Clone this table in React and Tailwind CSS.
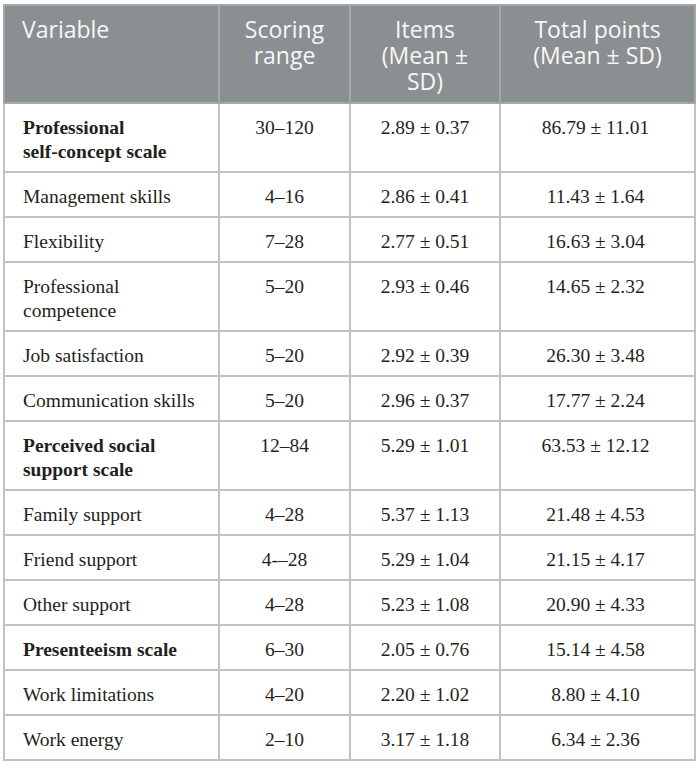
const ROWS = [
  { name: ['Professional', 'self-concept scale'], range: '30–120', items: '2.89 ± 0.37', total: '86.79 ± 11.01', bold: true },
  { name: ['Management skills'], range: '4–16', items: '2.86 ± 0.41', total: '11.43 ± 1.64' },
  { name: ['Flexibility'], range: '7–28', items: '2.77 ± 0.51', total: '16.63 ± 3.04' },
  { name: ['Professional', 'competence'], range: '5–20', items: '2.93 ± 0.46', total: '14.65 ± 2.32' },
  { name: ['Job satisfaction'], range: '5–20', items: '2.92 ± 0.39', total: '26.30 ± 3.48' },
  { name: ['Communication skills'], range: '5–20', items: '2.96 ± 0.37', total: '17.77 ± 2.24' },
  { name: ['Perceived social', 'support scale'], range: '12–84', items: '5.29 ± 1.01', total: '63.53 ± 12.12', bold: true },
  { name: ['Family support'], range: '4–28', items: '5.37 ± 1.13', total: '21.48 ± 4.53' },
  { name: ['Friend support'], range: '4-–28', items: '5.29 ± 1.04', total: '21.15 ± 4.17' },
  { name: ['Other support'], range: '4–28', items: '5.23 ± 1.08', total: '20.90 ± 4.33' },
  { name: ['Presenteeism scale'], range: '6–30', items: '2.05 ± 0.76', total: '15.14 ± 4.58', bold: true },
  { name: ['Work limitations'], range: '4–20', items: '2.20 ± 1.02', total: '8.80 ± 4.10' },
  { name: ['Work energy'], range: '2–10', items: '3.17 ± 1.18', total: '6.34 ± 2.36' },
];

const HEAD = [
  ['Variable'],
  ['Scoring', 'range'],
  ['Items', '(Mean ±', 'SD)'],
  ['Total points', '(Mean ± SD)'],
];

export default function App() {
  const th = 'align-top font-normal border-2 border-[#a3a8aa] pt-[10px] pb-[8px] px-[6px] whitespace-nowrap';
  const td = 'align-top border-2 border-[#c2c2c2] pt-[12px] pb-[7px] leading-[24px] whitespace-nowrap';

  return (
    <div className="bg-white min-h-[768px] pt-[4px] pl-[3px]">
      <table className="table-fixed border-collapse w-[691px]">
        <colgroup>
          <col className="w-[215px]" />
          <col className="w-[131px]" />
          <col className="w-[150px]" />
          <col className="w-[195px]" />
        </colgroup>
        <thead>
          <tr className="bg-[#8a8f91] text-[#f7f7f7] font-['Open_Sans',sans-serif] text-[23px] leading-[26px]">
            {HEAD.map((lines, i) => (
              <th key={i} className={`${th} ${i === 0 ? 'text-left pl-[17px]' : 'text-center'}`}>
                {lines.map(l => <div key={l}>{l}</div>)}
              </th>
            ))}
          </tr>
        </thead>
        <tbody className="font-['Liberation_Serif',serif] text-[19.5px] text-[#231f20]">
          {ROWS.map(r => (
            <tr key={r.name.join(' ')}>
              <td className={`${td} pl-[18px] pr-[6px] ${r.bold ? 'font-bold' : ''}`}>
                {r.name.map(l => <div key={l}>{l}</div>)}
              </td>
              <td className={`${td} text-center`}>{r.range}</td>
              <td className={`${td} text-center`}>{r.items}</td>
              <td className={`${td} text-center pr-[4px]`}>{r.total}</td>
            </tr>
          ))}
        </tbody>
      </table>
    </div>
  );
}
